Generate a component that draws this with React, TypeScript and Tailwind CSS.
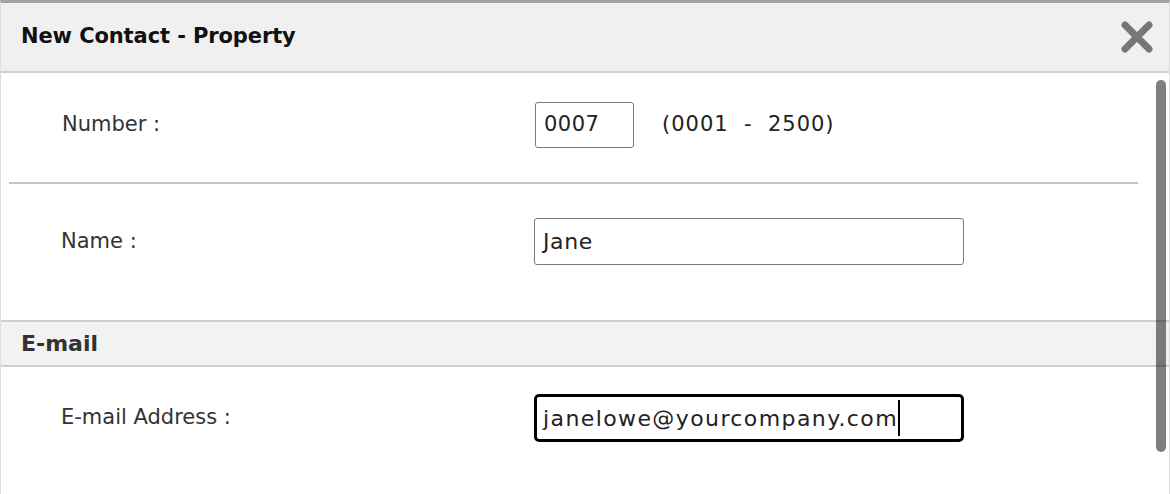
import React from "react";

const FONT = { fontFamily: '"DejaVu Sans", "Liberation Sans", sans-serif' };

function CloseIcon() {
  return (
    <svg width="32" height="32" viewBox="0 0 32 32" aria-label="Close">
      <path d="M4 4 L28 28 M28 4 L4 28" stroke="#777" strokeWidth="7" strokeLinecap="round" />
    </svg>
  );
}

export default function App() {
  return (
    <div
      className="relative w-[1170px] h-[494px] overflow-hidden bg-white border-t-[3px] border-t-[#a3a3a3] border-x border-x-[#dddddd]"
      style={FONT}
    >
      {/* Header */}
      <div className="flex items-center justify-between h-[70px] bg-[#f0f0f0] border-b-[2px] border-b-[#cfcfcf] pl-[20px] pr-[16px]">
        <h1 className="text-[21px] font-bold text-[#111] tracking-[-0.1px]">New Contact - Property</h1>
        <CloseIcon />
      </div>

      {/* Number row */}
      <div className="mx-[8px] mr-[31px] border-b-[2px] border-b-[#c4c4c4] pt-[29px] pb-[34px]">
        <div className="flex items-center">
          <div className="w-[526px] pl-[53px] text-[21px] text-[#333]">Number :</div>
          <div className="w-[99px] h-[46px] border-[1.5px] border-[#7a7a7a] rounded-[3px] flex items-center pl-[8px] text-[21px] text-[#222] tracking-[0.5px]">
            0007
          </div>
          <div className="ml-[28px] text-[21px] text-[#222] tracking-[1px] whitespace-pre">(0001  -  2500)</div>
        </div>
      </div>

      {/* Name row */}
      <div className="pt-[34px] pb-[55px]">
        <div className="flex items-center">
          <div className="w-[533px] pl-[60px] text-[21px] text-[#333]">Name :</div>
          <div className="w-[430px] h-[47px] border-[1.5px] border-[#7a7a7a] rounded-[3px] flex items-center pl-[8px] text-[22px] text-[#222] tracking-[0.6px]">
            Jane
          </div>
        </div>
      </div>

      {/* Section header */}
      <div className="h-[47px] bg-[#f2f2f2] border-y-[2px] border-y-[#cfcfcf] flex items-center pl-[20px]">
        <span className="text-[22px] font-semibold text-[#333]">E-mail</span>
      </div>

      {/* Email row */}
      <div className="pt-[27px]">
        <div className="flex items-center">
          <div className="w-[533px] pl-[60px] text-[21px] text-[#333]">E-mail Address :</div>
          <div className="w-[430px] h-[48px] border-[3px] border-black rounded-[5px] flex items-center pl-[6px] text-[22px] text-[#222] tracking-[1.4px]">
            <span>janelowe@yourcompany.com</span>
            <span className="inline-block w-[2px] h-[36px] bg-black" />
          </div>
        </div>
      </div>

      {/* Scrollbar overlay */}
      <div className="absolute left-[1155px] top-[77px] w-[10px] h-[372px] rounded-full bg-black/50" />
    </div>
  );
}
